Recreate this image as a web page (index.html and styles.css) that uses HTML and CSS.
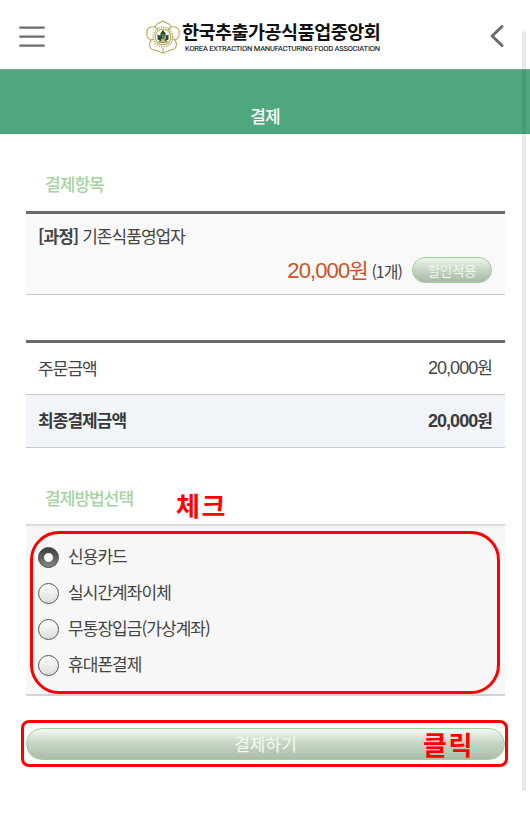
FILE: index.html
```
<!DOCTYPE html>
<html lang="ko">
<head>
<meta charset="utf-8">
<title>결제</title>
<link rel="stylesheet" href="styles.css">
</head>
<body>
<header class="topbar">
  <svg class="menu" width="26" height="22" viewBox="0 0 26 22" fill="none" stroke="#6b6b6b" stroke-width="2.2" stroke-linecap="round"><path d="M1.2 1.6H24.8M1.2 10.6H24.8M1.2 19.6H24.8"/></svg>
  <div class="brand">
    <svg class="emblem" width="36" height="34" viewBox="0 0 36 34" fill="none">
      <g stroke="#b9a552" stroke-width="1.1">
        <path d="M10 7C11 3 15 3 18 1C21 3 25 3 26 7C31 6 35 9 34 13C35 16 33 19 30 20C33 25 31 30 26 30C22 31 20 33 18 33C16 33 14 31 10 30C5 30 3 25 6 20C3 19 1 16 2 13C1 9 5 6 10 7Z"/>
        <path d="M10 7L13 10M26 7L23 10M30 20L27 19M6 20L9 19M18 28V33"/>
        <circle cx="18" cy="17" r="9.8" stroke-width="1.6" stroke-dasharray="1.2 1.1"/>
        <circle cx="18" cy="17" r="7.8"/>
      </g>
      <path d="M12.5 14.5L16.4 16V21.5L12.5 19.5ZM23.5 14.5L19.6 16V21.5L23.5 19.5ZM15.5 13L18 10L20.5 13V19H15.5Z" fill="#244f30"/>
      <path d="M13.5 21.5L18 22.5L22.5 21.5M18 14V21" stroke="#a08b32" stroke-width="1.3"/>
    </svg>
    <div class="names">
      <strong class="name-ko">한국추출가공식품업중앙회</strong>
      <span class="name-en">KOREA EXTRACTION MANUFACTURING FOOD ASSOCIATION</span>
    </div>
  </div>
  <svg class="back" width="14" height="24" viewBox="0 0 14 24" fill="none" stroke="#6b6b6b" stroke-width="3" stroke-linecap="round" stroke-linejoin="round"><path d="M12 2.5L2.2 12L12 21.5"/></svg>
</header>
<div class="titlebar"><h1>결제</h1></div>
<main>
  <h2>결제항목</h2>
  <section class="item">
    <p><b>[과정]</b> 기존식품영업자</p>
    <div class="price-row">
      <span class="price"><span class="num">20,000</span>원</span>
      <span class="qty">(1개)</span>
      <button class="discount">할인적용</button>
    </div>
  </section>
  <section class="totals">
    <div class="row"><span>주문금액</span><span><span class="num">20,000</span>원</span></div>
    <div class="row final"><span>최종결제금액</span><span><span class="num">20,000</span>원</span></div>
  </section>
  <h2 class="method-title">결제방법선택<span class="note note-check">체크</span></h2>
  <section class="methods">
    <label><i class="radio on"></i><span>신용카드</span></label>
    <label><i class="radio"></i><span>실시간계좌이체</span></label>
    <label><i class="radio"></i><span>무통장입금(가상계좌)</span></label>
    <label><i class="radio"></i><span>휴대폰결제</span></label>
    <span class="mark mark-methods"></span>
  </section>
  <div class="pay-wrap">
    <button class="pay">결제하기</button>
    <span class="mark mark-pay"></span>
    <span class="note note-click">클릭</span>
  </div>
</main>
<div class="scrollbar"></div>
</body>
</html>
```
FILE: styles.css
```
* { box-sizing: border-box; }
body {
  margin: 0;
  position: relative;
  height: 827px;
  overflow: hidden;
  background: #fff;
  color: #444;
  font: 17px/24px "Noto Sans CJK KR", sans-serif;
  letter-spacing: -0.95px;
}
h1, h2, p { margin: 0; }
button { font-family: inherit; padding: 0; display: block; }
.topbar {
  height: 69px;
  display: flex;
  align-items: flex-start;
  padding: 0 26px 0 19px;
}
.menu { margin-top: 26px; }
.brand { display: flex; margin: 20px auto 0 100px; }
.names { display: flex; flex-direction: column; white-space: nowrap; margin-left: 1px; }
.name-ko { font-size: 18.5px; line-height: 23px; letter-spacing: -0.5px; color: #111; }
.name-en {
  margin: 1px 0 0 3px;
  font: 7.5px/10px Roboto, sans-serif;
  letter-spacing: -0.19px;
  color: #111;
  -webkit-text-stroke: 0.1px #111;
}
.back { margin-top: 24px; }
.titlebar {
  height: 65px;
  padding-top: 34px;
  background: #4fa780;
  border-top: 1px solid #6eb595;
  border-bottom: 1px solid #43a377;
  text-align: center;
}
h1 { font-size: 17px; line-height: 24px; color: #fff; font-weight: 500; }
main { padding: 38px 25px 0 26px; }
h2 { font-size: 17px; line-height: 24px; font-weight: 500; color: #a5d3a2; padding-left: 19px; }
.item {
  margin-top: 15px;
  height: 84px;
  border-top: 3px solid #6a6a6a;
  border-bottom: 1px solid #c8c8c8;
  background: #f9f9f9;
  padding: 10px 13px 0 12px;
}
.num { font-family: "Liberation Sans", sans-serif; font-size: 18px; }
.price-row { display: flex; justify-content: flex-end; align-items: center; height: 43px; }
.price { font-size: 21px; color: #cf5126; letter-spacing: -1.2px; }
.price .num { font-size: 22px; letter-spacing: -0.9px; }
.qty { font-size: 16px; margin: 2px 10px 0 4px; }
.discount {
  width: 80px;
  height: 26px;
  border: 1px solid #9dd39b;
  border-radius: 13px;
  background: linear-gradient(#f0f6ef, #c5d5c3 50%, #a9b9a8);
  color: #eef6ee;
  font-size: 13.5px;
  line-height: 24px;
  letter-spacing: -0.3px;
}
.totals { margin-top: 45px; border-top: 3px solid #6a6a6a; }
.row {
  height: 52px;
  display: flex;
  justify-content: space-between;
  align-items: center;
  padding: 0 13px 2px 12px;
  border-bottom: 1px solid #c8c8c8;
}
.final { background: #f1f5fa; font-weight: 700; color: #3a3a3a; height: 53px; }
.method-title { margin-top: 38px; position: relative; }
.note {
  position: absolute;
  color: #f00;
  font-size: 26px;
  line-height: 34px;
  font-weight: 700;
  letter-spacing: 1.5px;
}
.note-check { left: 150px; top: 2px; }
.methods {
  position: relative;
  margin-top: 14px;
  height: 172px;
  padding: 13px 12px 0;
  background: #f7f7f7;
  border-top: 2px solid #dadada;
  border-bottom: 2px solid #d4d4d4;
}
.methods label { display: flex; align-items: center; height: 36px; gap: 9px; }
.methods label span { margin-bottom: 3px; }
.radio {
  width: 21px;
  height: 21px;
  border: 1.5px solid #555;
  border-radius: 50%;
  background: linear-gradient(#fff, #dcdcdc);
}
.radio.on {
  border-color: #444;
  background: radial-gradient(circle, #fff 0 3.5px, #d8d8d8 4.2px, transparent 5px), linear-gradient(#3c3c3c, #858585);
}
.mark { position: absolute; border: 3px solid #f00; }
.mark-methods { left: 4px; top: 5px; width: 470px; height: 163px; border-radius: 29px; }
.pay-wrap { position: relative; margin-top: 32px; }
.pay {
  width: 479px;
  height: 32px;
  border: 1px solid #9dd39b;
  border-radius: 16px;
  background: linear-gradient(#f5f9f5, #c8d6c5 45%, #acbcab);
  color: #f4faf4;
  font-size: 17px;
  line-height: 30px;
  letter-spacing: 0;
}
.mark-pay { left: -5px; top: -8px; width: 487px; height: 47px; border-radius: 8px; }
.note-click { left: 397px; top: -1px; }
.scrollbar { position: absolute; left: 522px; top: 31px; width: 4px; height: 760px; border-radius: 2px 2px 0 0; background: rgba(0,0,0,.08); }
```
